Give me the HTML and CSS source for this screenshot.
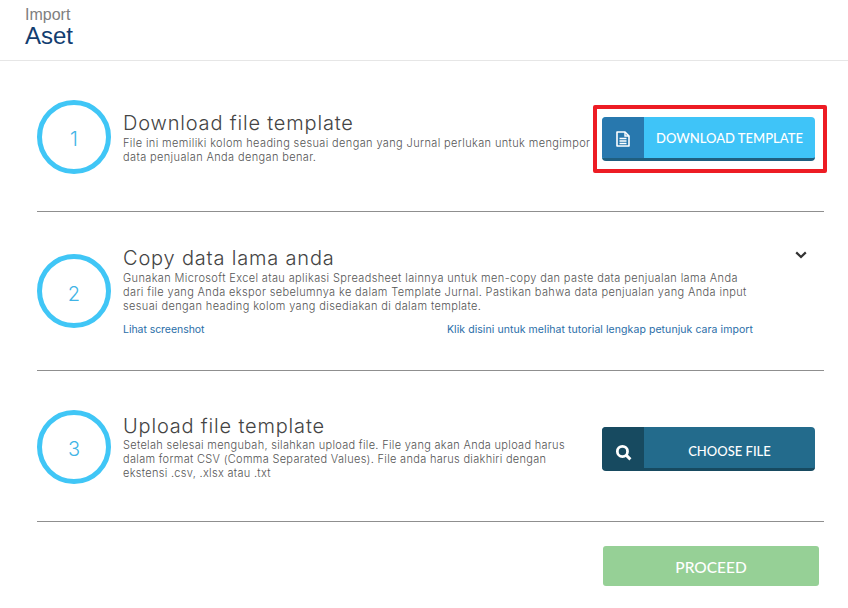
FILE: index.html
```html
<!DOCTYPE html>
<html lang="id">
<head>
<meta charset="utf-8">
<title>Import Aset</title>
<link rel="stylesheet" href="styles.css">
</head>
<body>
<header class="page-head">
  <div class="crumb">Import</div>
  <h1 class="page-title">Aset</h1>
</header>
<main class="steps">
  <section class="step step-one">
    <div class="circle">1</div>
    <div class="body">
      <h2 class="step-title">Download file template</h2>
      <p class="desc">File ini memiliki kolom heading sesuai dengan yang Jurnal perlukan untuk mengimpor data penjualan Anda dengan benar.</p>
    </div>
    <div class="action">
      <a class="btn btn-light">
        <span class="btn-icon">
          <svg width="14" height="16" viewBox="0 0 14 16"><path d="M1 1h8l4 4v10H1z" fill="none" stroke="#fff" stroke-width="1.6" stroke-linejoin="round"/><path d="M9 1v4h4" fill="none" stroke="#fff" stroke-width="1.4"/><path d="M3.5 7.5h7M3.5 10h7M3.5 12.5h7" stroke="#fff" stroke-width="1.4"/></svg>
        </span>
        <span class="btn-label">DOWNLOAD TEMPLATE</span>
      </a>
      <div class="highlight"></div>
    </div>
  </section>
  <section class="step step-two">
    <div class="circle">2</div>
    <div class="body body-wide">
      <h2 class="step-title">Copy data lama anda</h2>
      <p class="desc">Gunakan Microsoft Excel atau aplikasi Spreadsheet lainnya untuk men-copy dan paste data penjualan lama Anda dari file yang Anda ekspor sebelumnya ke dalam Template Jurnal. Pastikan bahwa data penjualan yang Anda input sesuai dengan heading kolom yang disediakan di dalam template.</p>
      <div class="links">
        <a class="link">Lihat screenshot</a>
        <a class="link">Klik disini untuk melihat tutorial lengkap petunjuk cara import</a>
      </div>
    </div>
    <svg class="chevron" width="12" height="8" viewBox="0 0 12 8"><path d="M1.2 1.4 6 6l4.8-4.6" fill="none" stroke="#333" stroke-width="2.2"/></svg>
  </section>
  <section class="step step-three">
    <div class="circle">3</div>
    <div class="body">
      <h2 class="step-title">Upload file template</h2>
      <p class="desc">Setelah selesai mengubah, silahkan upload file. File yang akan Anda upload harus dalam format CSV (Comma Separated Values). File anda harus diakhiri dengan ekstensi .csv, .xlsx atau .txt</p>
    </div>
    <div class="action">
      <a class="btn btn-dark">
        <span class="btn-icon">
          <svg width="17" height="17" viewBox="0 0 16 16"><circle cx="7" cy="7" r="4.8" fill="none" stroke="#fff" stroke-width="2.6"/><path d="M10.5 10.5 14.5 14.5" stroke="#fff" stroke-width="2.8"/></svg>
        </span>
        <span class="btn-label">CHOOSE FILE</span>
      </a>
    </div>
  </section>
  <div class="foot"><button class="proceed">PROCEED</button></div>
</main>
</body>
</html>
```
FILE: styles.css
```css
* { box-sizing: border-box; }
html, body { margin: 0; height: 100%; }
body { background: #fff; font-family: Inter, "Liberation Sans", sans-serif; color: #444; overflow: hidden; }
.page-head { height: 61px; padding: 6px 0 0 25px; border-bottom: 1px solid #e6e6e6; font-family: "Liberation Sans", Arial, sans-serif; }
.crumb { font-size: 16px; line-height: 17px; color: #808080; }
.page-title { margin: 0; font-size: 24px; line-height: 25px; font-weight: 400; color: #123d70; }
.steps { margin: 0 24px 0 37px; }
.step { display: flex; border-bottom: 1px solid #8f8f8f; }
.step-one { height: 151px; padding-top: 39px; }
.step-two { height: 159px; padding-top: 42px; }
.step-three { height: 151px; padding-top: 39px; }
.circle { flex: none; width: 74px; height: 74px; border: 5px solid #40c6f6; border-radius: 50%; display: flex; align-items: center; justify-content: center; font-size: 20px; font-weight: 300; color: #40b4e6; padding-top: 4px; }
.step-two .circle { padding-top: 6px; }
.body { width: 470px; margin-left: 12px; }
.body-wide { width: 630px; margin-top: -7px; }
.step-one .body { margin-top: 12px; }
.step-three .body { margin-top: 5px; width: 450px; }
.step-title { margin: 0 0 2px; font-size: 20px; line-height: 22px; font-weight: 300; color: #444; letter-spacing: .82px; }
.step-three .step-title { margin-bottom: 1px; }
.desc { margin: 0; font-size: 11px; line-height: 14px; font-weight: 300; color: #555; letter-spacing: .37px; }
.step-three .desc { letter-spacing: .3px; }
.links { display: flex; justify-content: space-between; margin-top: 10px; }
.link { font-size: 10.5px; line-height: 14px; color: #2a6ea8; letter-spacing: .07px; }
.link:first-child { letter-spacing: -.05px; }
.action { position: relative; width: 213px; }
.step-one .action { margin-top: 17px; margin-left: 9px; }
.step-three .action { margin-top: 17px; margin-left: 29px; }
.btn { display: flex; height: 44px; border-radius: 4px; overflow: hidden; color: #fff; font-family: Lato, sans-serif; font-weight: 500; }
.btn-icon { flex: none; width: 42px; display: flex; align-items: center; justify-content: center; }
.btn-label { flex: 1; display: flex; align-items: center; justify-content: center; font-size: 13px; }
.btn-light { border-bottom: 3px solid #1f5f80; background: #3fc4f8; }
.btn-light .btn-icon { background: #2878ae; padding-top: 3px; }
.btn-dark { border-bottom: 3px solid #174a60; background: #236b8c; }
.btn-dark .btn-icon { background: #174a60; padding-top: 10px; }
.btn-dark .btn-label { padding-top: 6px; }
.highlight { position: absolute; left: -9px; top: -12px; width: 234px; height: 68px; border: 4.5px solid #ed1c24; border-radius: 2px; }
.chevron { flex: none; margin: -3px 0 0 42px; }
.foot { display: flex; justify-content: flex-end; padding-top: 24px; margin-right: 5px; }
.proceed { width: 216px; height: 40px; border: 0; border-radius: 3px; background: #96d096; color: #fff; font-family: Lato, sans-serif; font-size: 15.5px; font-weight: 500; padding-top: 2px; }
```
